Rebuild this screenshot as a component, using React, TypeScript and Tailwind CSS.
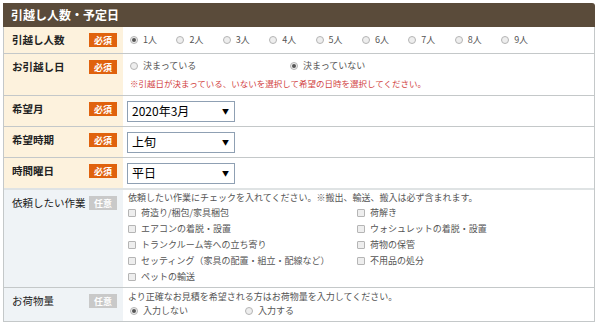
const font = { fontFamily: '"Noto Sans CJK JP", "Noto Sans", sans-serif' };

function Badge({ required }: { required: boolean }) {
  return (
    <span
      className={`flex h-[14px] w-[28px] shrink-0 items-center justify-center text-[9px] font-bold leading-none text-white ${
        required ? 'bg-[#e0620d]' : 'bg-[#c9c9c9]'
      }`}>
      {required ? '必須' : '任意'}
    </span>
  );
}

function Label({
  text,
  required,
  bold = true,
}: {
  text: string;
  required: boolean;
  bold?: boolean;
}) {
  return (
    <div
      className={`flex items-start justify-between pl-[8px] pr-[6px] pt-[6px] ${
        required ? 'bg-[#fdf2dd]' : 'bg-[#eff3f6]'
      }`}>
      <span
        className={`whitespace-nowrap text-[10.5px] leading-[14px] text-[#222] ${
          bold ? 'font-bold' : 'font-normal'
        }`}>
        {text}
      </span>
      <Badge required={required} />
    </div>
  );
}

function Radio({ label, checked = false }: { label: string; checked?: boolean }) {
  return (
    <span className="flex items-center gap-[5px] text-[9px] text-[#555]">
      <span className="flex h-[8px] w-[8px] items-center justify-center rounded-full border border-[#b5b5b5] bg-[#eee]">
        {checked && <span className="h-[4px] w-[4px] rounded-full bg-[#555]" />}
      </span>
      {label}
    </span>
  );
}

function Check({ label }: { label: string }) {
  return (
    <span className="flex h-[16px] items-center gap-[5px] whitespace-nowrap text-[9px] text-[#555]">
      <span className="h-[8px] w-[8px] rounded-[1px] border border-[#b5b5b5] bg-[#eee]" />
      {label}
    </span>
  );
}

function Select({ value }: { value: string }) {
  return (
    <div className="flex h-[21px] w-[108px] items-center justify-between border border-[#8fa0b3] bg-white pl-[4px] pr-[5px]">
      <span className="text-[12px] text-black">{value}</span>
      <span className="text-[7px] text-black">▼</span>
    </div>
  );
}

export default function App() {
  const people = ['1人', '2人', '3人', '4人', '5人', '6人', '7人', '8人', '9人'];
  return (
    <div className="h-[330px] w-[600px] bg-white pl-[3px] pt-[3px]" style={font}>
      <div className="w-[592px]">
        <div className="flex h-[24px] items-center rounded-tr-[3px] bg-[#5a4b3a] pl-[8px] text-[12px] font-bold text-white">
          引越し人数・予定日
        </div>
        <div className="grid grid-cols-[119px_1fr] border-b border-l border-r border-[#c4c8c9]">
          <Label text="引越し人数" required />
          <div className="flex h-[26px] items-center pl-[7px]">
            {people.map((p, i) => (
              <span key={p} className="w-[46.4px]">
                <Radio label={p} checked={i === 0} />
              </span>
            ))}
          </div>

          <div className="col-span-2 h-px bg-[#c4c8c9]" />
          <Label text="お引越し日" required />
          <div className="flex h-[41px] flex-col justify-center gap-[4px] pl-[7px]">
            <div className="flex">
              <span className="w-[160px]">
                <Radio label="決まっている" />
              </span>
              <Radio label="決まっていない" checked />
            </div>
            <span className="text-[8.5px] text-[#d2433f]">
              ※引越日が決まっている、いないを選択して希望の日時を選択してください。
            </span>
          </div>

          <div className="col-span-2 h-px bg-[#c4c8c9]" />
          <Label text="希望月" required />
          <div className="flex h-[30px] items-center pl-[4px]">
            <Select value="2020年3月" />
          </div>

          <div className="col-span-2 h-px bg-[#c4c8c9]" />
          <Label text="希望時期" required />
          <div className="flex h-[30px] items-center pl-[4px]">
            <Select value="上旬" />
          </div>

          <div className="col-span-2 h-px bg-[#c4c8c9]" />
          <Label text="時間曜日" required />
          <div className="flex h-[30px] items-center pl-[4px]">
            <Select value="平日" />
          </div>

          <div className="col-span-2 h-[2px] bg-[#dfe3e4]" />
          <Label text="依頼したい作業" required={false} bold={false} />
          <div className="flex h-[97px] flex-col pl-[5px] pt-[1px]">
            <span className="h-[14px] text-[9px] leading-[14px] text-[#555]">
              依頼したい作業にチェックを入れてください。※搬出、輸送、搬入は必ず含まれます。
            </span>
            <div className="grid grid-cols-[229px_1fr]">
              <Check label="荷造り/梱包/家具梱包" />
              <Check label="荷解き" />
              <Check label="エアコンの着脱・設置" />
              <Check label="ウォシュレットの着脱・設置" />
              <Check label="トランクルーム等への立ち寄り" />
              <Check label="荷物の保管" />
              <Check label="セッティング（家具の配置・組立・配線など）" />
              <Check label="不用品の処分" />
              <Check label="ペットの輸送" />
            </div>
          </div>

          <div className="col-span-2 h-px bg-[#c4c8c9]" />
          <Label text="お荷物量" required={false} bold={false} />
          <div className="flex h-[33px] flex-col pl-[5px] pt-[2px]">
            <span className="h-[14px] text-[9px] leading-[14px] text-[#555]">
              より正確なお見積を希望される方はお荷物量を入力してください。
            </span>
            <div className="flex pl-[2px]">
              <span className="w-[115px]">
                <Radio label="入力しない" checked />
              </span>
              <Radio label="入力する" />
            </div>
          </div>
        </div>
      </div>
    </div>
  );
}
